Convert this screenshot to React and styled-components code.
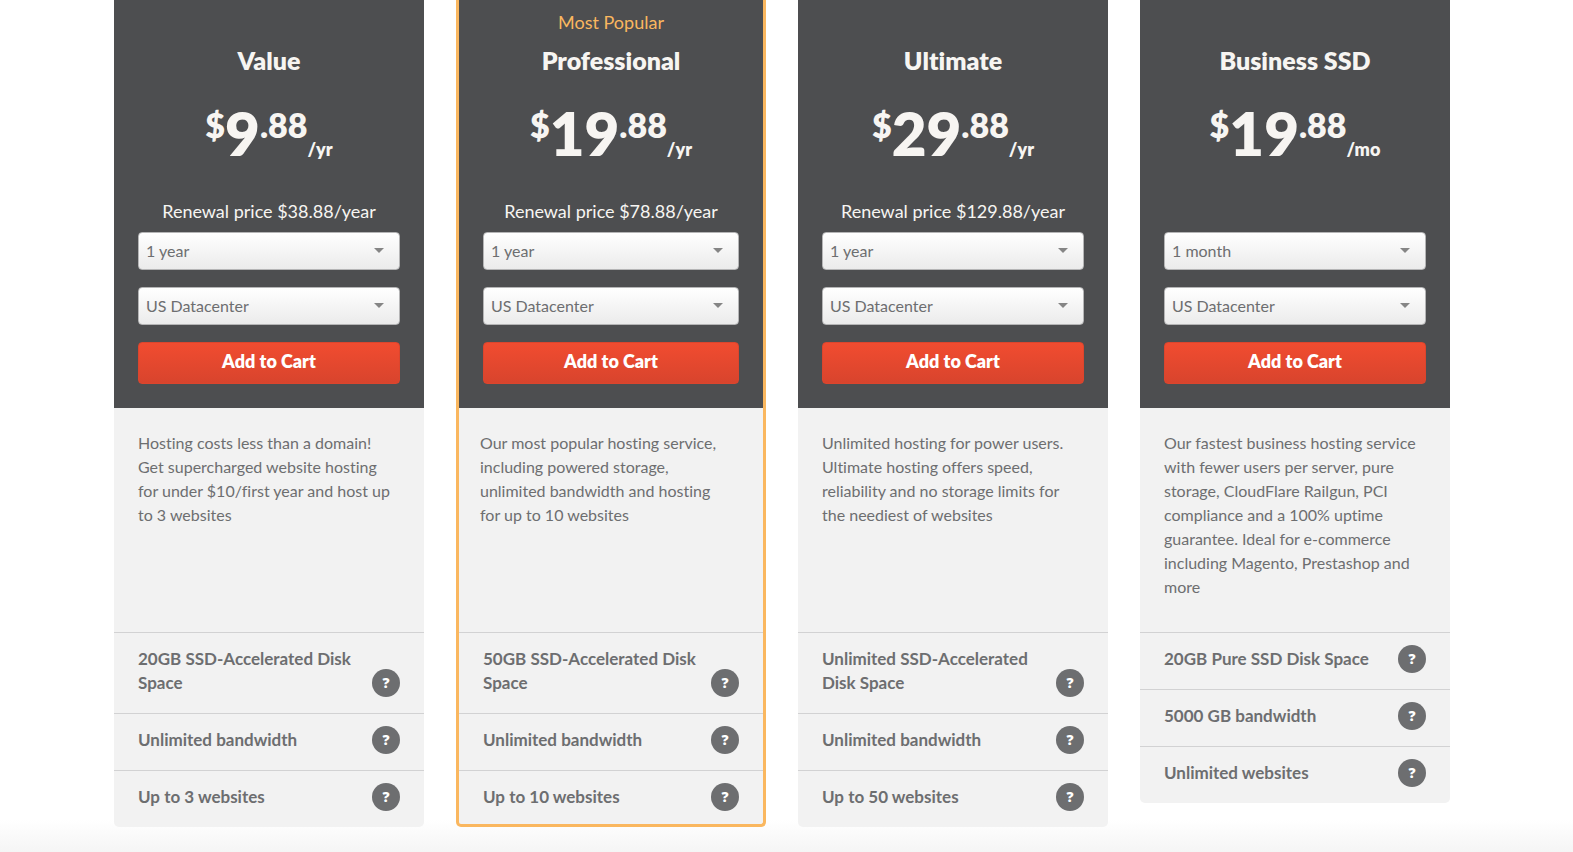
import React from 'react';
import styled, { createGlobalStyle } from 'styled-components';

const GlobalStyle = createGlobalStyle`
  *, *::before, *::after { box-sizing: border-box; }
  body { margin: 0; background: #fff; font-variant-ligatures: none; }
  body, button, select { font-family: Lato, "Open Sans", "Noto Sans", sans-serif; }
  h2, p, ul { margin: 0; padding: 0; }
`;

const Page = styled.main`
  min-height: 100vh;
  padding: 0 9px 25px 0;
  background: linear-gradient(#fff, #f5f5f5) bottom / 100% 32px no-repeat;
`;

const Plans = styled.div`
  display: grid;
  grid-template-columns: repeat(4, minmax(0, 1fr));
  align-items: start;
  gap: 32px;
  max-width: 1336px;
  margin: 0 auto;
`;

const Card = styled.section`
  overflow: hidden;
  background: #f2f2f2;
  color: #6d6e70;
  border: solid #fab75f;
  border-width: ${(p) => (p.$popular ? '0 3px 3px' : '0')};
  border-radius: 0 0 5px 5px;
`;

const Head = styled.header`
  display: flex;
  flex-direction: column;
  padding: 10px 24px 24px;
  background: #4d4e50;
  color: #f7f5f2;
  text-align: center;
`;

const Badge = styled.p`
  height: 24px;
  color: #fab75f;
  font-size: 18px;
  line-height: 24px;
`;

const Name = styled.h2`
  margin: 10px 0 27px;
  font-size: 25px;
  font-weight: 800;
  line-height: 32px;
`;

const Price = styled.p`
  display: flex;
  justify-content: center;
  align-items: flex-start;
  margin-bottom: 36px;
  font-weight: 800;
`;

const Raised = styled.span`
  font-size: 34px;
  line-height: 44px;
`;

const Amount = styled.span`
  font-size: 60px;
  line-height: 60px;
`;

const Term = styled.span`
  align-self: flex-end;
  font-size: 18px;
  line-height: 28px;
`;

const Renewal = styled.p`
  height: 24px;
  margin-bottom: 9px;
  font-size: 18px;
  line-height: 24px;
`;

const SelectBox = styled.div`
  position: relative;
  margin-bottom: 17px;
`;

const Select = styled.select`
  display: block;
  width: 100%;
  height: 38px;
  padding: 0 32px 2px 7px;
  appearance: none;
  border: 1px solid #b5b5b6;
  border-radius: 4px;
  background: linear-gradient(#fff, #ebebeb);
  color: #6d6e70;
  font-size: 16px;
`;

const Arrow = styled.svg`
  position: absolute;
  top: 16px;
  right: 16px;
  width: 10px;
  height: 5px;
  fill: #858585;
  pointer-events: none;
`;

const CartButton = styled.button`
  height: 42px;
  padding: 0 0 4px;
  border: 1px solid #dc452d;
  border-radius: 4px;
  background: linear-gradient(#f14c30, #d8442d);
  color: #fff;
  font-size: 18px;
  font-weight: 800;
  cursor: pointer;
`;

const Description = styled.p`
  min-height: 224px;
  padding: ${(p) => (p.$popular ? '23px 35px 33px 21px' : '23px 24px 33px')};
  font-size: 16px;
  line-height: 24px;
`;

const Features = styled.ul`
  list-style: none;
`;

const Feature = styled.li`
  display: flex;
  justify-content: space-between;
  align-items: flex-end;
  padding: 12px 24px 16px;
  border-top: 1px solid #d2d2d3;
  &:last-child { padding-bottom: ${(p) => (p.$popular ? '13px' : '16px')}; }
`;

const FeatureText = styled.span`
  flex: 0 1 220px;
  padding: 2px 0;
  font-size: 17px;
  font-weight: 700;
  line-height: 24px;
`;

const Help = styled.button`
  flex: none;
  width: 28px;
  height: 28px;
  padding: 0;
  border: 0;
  border-radius: 50%;
  background: #6d6e70;
  color: #fff;
  font-family: "Open Sans", sans-serif;
  font-size: 14px;
  font-weight: 800;
  line-height: 28px;
  cursor: pointer;
`;

const plans = [
  {
    name: 'Value',
    whole: '9',
    unit: '/yr',
    renewal: 'Renewal price $38.88/year',
    term: '1 year',
    text: 'Hosting costs less than a domain! Get supercharged website hosting for under $10/first year and host up to 3 websites',
    features: ['20GB SSD-Accelerated Disk Space', 'Unlimited bandwidth', 'Up to 3 websites'],
  },
  {
    name: 'Professional',
    badge: 'Most Popular',
    whole: '19',
    unit: '/yr',
    renewal: 'Renewal price $78.88/year',
    term: '1 year',
    text: 'Our most popular hosting service, including powered storage, unlimited bandwidth and hosting for up to 10 websites',
    features: ['50GB SSD-Accelerated Disk Space', 'Unlimited bandwidth', 'Up to 10 websites'],
  },
  {
    name: 'Ultimate',
    whole: '29',
    unit: '/yr',
    renewal: 'Renewal price $129.88/year',
    term: '1 year',
    text: 'Unlimited hosting for power users. Ultimate hosting offers speed, reliability and no storage limits for the neediest of websites',
    features: ['Unlimited SSD-Accelerated Disk Space', 'Unlimited bandwidth', 'Up to 50 websites'],
  },
  {
    name: 'Business SSD',
    whole: '19',
    unit: '/mo',
    term: '1 month',
    text: 'Our fastest business hosting service with fewer users per server, pure storage, CloudFlare Railgun, PCI compliance and a 100% uptime guarantee. Ideal for e-commerce including Magento, Prestashop and more',
    features: ['20GB Pure SSD Disk Space', '5000 GB bandwidth', 'Unlimited websites'],
  },
];

function Dropdown({ label, option }) {
  return (
    <SelectBox>
      <Select aria-label={label}>
        <option>{option}</option>
      </Select>
      <Arrow viewBox="0 0 10 5" aria-hidden="true">
        <path d="M0 0h10L5 5z" />
      </Arrow>
    </SelectBox>
  );
}

function Plan({ plan }) {
  const popular = Boolean(plan.badge);
  return (
    <Card $popular={popular}>
      <Head>
        <Badge>{plan.badge}</Badge>
        <Name>{plan.name}</Name>
        <Price>
          <Raised>$</Raised>
          <Amount>{plan.whole}</Amount>
          <Raised>.88</Raised>
          <Term>{plan.unit}</Term>
        </Price>
        <Renewal>{plan.renewal}</Renewal>
        <Dropdown label={`${plan.name} billing term`} option={plan.term} />
        <Dropdown label={`${plan.name} datacenter`} option="US Datacenter" />
        <CartButton type="button">Add to Cart</CartButton>
      </Head>
      <Description $popular={popular}>{plan.text}</Description>
      <Features>
        {plan.features.map((feature) => (
          <Feature key={feature} $popular={popular}>
            <FeatureText>{feature}</FeatureText>
            <Help type="button" aria-label={`About ${feature}`}>?</Help>
          </Feature>
        ))}
      </Features>
    </Card>
  );
}

export default function App() {
  return (
    <>
      <GlobalStyle />
      <Page>
        <Plans>
          {plans.map((plan) => (
            <Plan key={plan.name} plan={plan} />
          ))}
        </Plans>
      </Page>
    </>
  );
}
